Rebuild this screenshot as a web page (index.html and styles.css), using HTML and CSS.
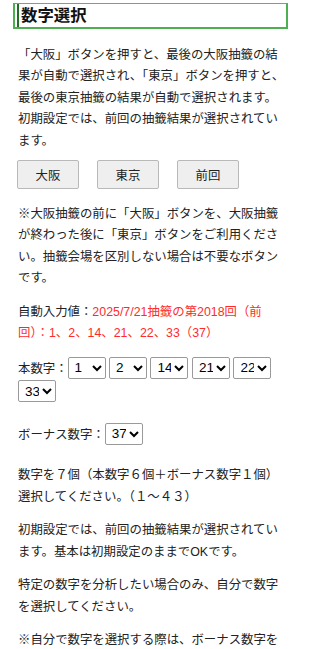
FILE: index.html
```html
<!DOCTYPE html>
<html lang="ja">
<head>
<meta charset="utf-8">
<title>数字選択</title>
<link rel="stylesheet" href="styles.css">
</head>
<body>
<div class="page">
  <h2 class="title">数字選択</h2>
  <p class="lead">「大阪」ボタンを押すと、最後の大阪抽籤の結果が自動で選択され、「東京」ボタンを押すと、最後の東京抽籤の結果が自動で選択されます。初期設定では、前回の抽籤結果が選択されています。</p>
  <div class="buttons">
    <button class="btn" type="button">大阪</button>
    <button class="btn" type="button">東京</button>
    <button class="btn" type="button">前回</button>
  </div>
  <p>※大阪抽籤の前に「大阪」ボタンを、大阪抽籤が終わった後に「東京」ボタンをご利用ください。抽籤会場を区別しない場合は不要なボタンです。</p>
  <p>自動入力値：<span class="red">2025/7/21抽籤の第2018回（前</span><span class="red">回）：1、2、14、21、22、33（37）</span></p>
  <p class="selects">本数字：<select class="num"><option>1</option></select> <select class="num"><option>2</option></select> <select class="num"><option>14</option></select> <select class="num"><option>21</option></select> <select class="num"><option>22</option></select> <select class="num"><option>33</option></select></p>
  <p class="selects">ボーナス数字：<select class="num"><option>37</option></select></p>
  <p>数字を７個（本数字６個＋ボーナス数字１個）選択してください。（１～４３）</p>
  <p>初期設定では、前回の抽籤結果が選択されています。基本は初期設定のままでOKです。</p>
  <p>特定の数字を分析したい場合のみ、自分で数字を選択してください。</p>
  <p>※自分で数字を選択する際は、ボーナス数字を含めて７個の数字を重複なく選択してください。</p>
</div>
</body>
</html>
```

FILE: styles.css
```css
html, body {
  margin: 0;
  padding: 0;
  background: #ffffff;
}

body {
  font-family: "Liberation Sans", "Noto Sans CJK JP", sans-serif;
  font-size: 12.4px;
  line-height: 21.4px;
  color: #222222;
}

.page {
  width: 275px;
  padding: 3px 0 0 13px;
}

.title {
  margin: 0 0 16px 0;
  height: 23px;
  padding: 0 0 0 6px;
  border-top: 1px solid #5cb85c;
  border-right: 2px solid #4caf50;
  border-bottom: 2px solid #4caf50;
  border-left: 2px solid #4caf50;
  box-shadow: inset 2px 0 0 #ffffff, inset 4px 0 0 #1f6e23;
  font-size: 16.4px;
  line-height: 23px;
  font-weight: bold;
  color: #111111;
}

p {
  margin: 0 6px 12.2px 5px;
}

.lead {
  margin: 0 2px 8px 5px;
  font-feature-settings: "chws" 1;
}

.buttons {
  display: flex;
  gap: 18px;
  margin: 0 0 15px 4px;
}

.btn {
  width: 62px;
  height: 29px;
  padding: 0;
  background: #efefef;
  border: 1px solid #b9b9b9;
  border-radius: 2px;
  font-family: "Noto Sans CJK JP", sans-serif;
  font-size: 12.4px;
  color: #222222;
}

.red {
  color: #ff2b2b;
}

.selects {
  line-height: 23px;
  margin-bottom: 19px;
}

.num {
  width: 38px;
  height: 22px;
  font-family: "Liberation Sans", sans-serif;
  font-size: 13.5px;
  color: #000000;
  background: #ffffff;
  border: 1px solid #9a9a9a;
  border-radius: 2px;
  padding: 0 0 0 2px;
  margin: 0;
}
```
